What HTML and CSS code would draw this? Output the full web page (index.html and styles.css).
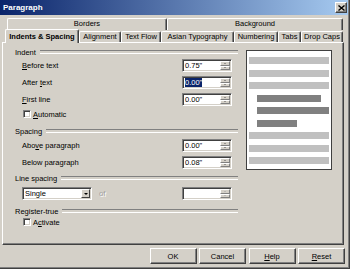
FILE: index.html
```html
<!DOCTYPE html>
<html lang="en">
<head>
  <meta charset="UTF-8" />
  <title>Paragraph</title>
  <link rel="stylesheet" href="styles.css">
</head>
<body>
  <div class="dialog">
    <div class="titlebar">
      <span class="title">Paragraph</span>
      <span class="close">
        <svg width="7" height="6" viewBox="0 0 7 6"><path d="M0.5 0.5 L6.5 5.5 M6.5 0.5 L0.5 5.5" stroke="#000" stroke-width="1.4" fill="none"/></svg>
      </span>
    </div>

    <div class="tabs">
      <div class="tabrow tabrow-back">
        <div class="tab tab-borders">Borders</div>
        <div class="tab">Background</div>
      </div>
      <div class="tabrow tabrow-front">
        <div class="tab active w-indents">Indents &amp; Spacing</div>
        <div class="tab w-align">Alignment</div>
        <div class="tab w-flow">Text Flow</div>
        <div class="tab w-asian">Asian Typography</div>
        <div class="tab w-num">Numbering</div>
        <div class="tab w-tabs">Tabs</div>
        <div class="tab w-caps">Drop Caps</div>
      </div>
    </div>

    <div class="panel">
      <div class="form">
        <div class="group-head">Indent</div>
        <div class="row first">
          <span><u>B</u>efore text</span>
          <div class="spin"><span class="spin-value">0.75"</span><span class="spin-btns"><i class="up"></i><i class="down"></i></span></div>
        </div>
        <div class="row">
          <span>After <u>t</u>ext</span>
          <div class="spin"><span class="spin-value"><span class="sel">0.00"</span></span><span class="spin-btns"><i class="up"></i><i class="down"></i></span></div>
        </div>
        <div class="row">
          <span><u>F</u>irst line</span>
          <div class="spin"><span class="spin-value">0.00"</span><span class="spin-btns"><i class="up"></i><i class="down"></i></span></div>
        </div>
        <div class="check-row">
          <span class="checkbox"></span><span><u>A</u>utomatic</span>
        </div>

        <div class="group-head spacing-head">Spacing</div>
        <div class="row above">
          <span>Abo<u>v</u>e paragraph</span>
          <div class="spin"><span class="spin-value">0.00"</span><span class="spin-btns"><i class="up"></i><i class="down"></i></span></div>
        </div>
        <div class="row">
          <span>Below paragraph</span>
          <div class="spin"><span class="spin-value">0.08"</span><span class="spin-btns"><i class="up"></i><i class="down"></i></span></div>
        </div>

        <div class="group-head">Line spacing</div>
        <div class="row select-row">
          <div class="select"><span class="select-value">Single</span><span class="select-btn"></span></div>
          <span class="of">of</span>
          <div class="spin disabled"><span class="spin-value"></span><span class="spin-btns"><i class="up"></i><i class="down"></i></span></div>
        </div>

        <div class="group-head register-head">Register-true</div>
        <div class="check-row activate">
          <span class="checkbox"></span><span>A<u>c</u>tivate</span>
        </div>
      </div>

      <div class="preview">
        <div class="bar"></div>
        <div class="bar"></div>
        <div class="bar"></div>
        <div class="bar dark bar-a"></div>
        <div class="bar dark bar-b"></div>
        <div class="bar dark bar-c"></div>
        <div class="bar"></div>
        <div class="bar"></div>
        <div class="bar"></div>
      </div>
    </div>

    <div class="buttons">
      <button>OK</button>
      <button>Cancel</button>
      <button><u>H</u>elp</button>
      <button><u>R</u>eset</button>
    </div>
  </div>
</body>
</html>
```

FILE: styles.css
```css
* {
  box-sizing: border-box;
  margin: 0;
  padding: 0;
}

body {
  width: 350px;
  height: 269px;
  overflow: hidden;
  background-color: #d4d0c8;
  font-family: "Liberation Sans", Arial, sans-serif;
  font-size: 7.5px;
  color: #000;
}

.dialog {
  height: 269px;
  border-right: 1px solid #404040;
  border-bottom: 1px solid #404040;
  box-shadow: inset -1px -1px #808080;
}

/* title bar */
.titlebar {
  height: 15px;
  margin-right: 1px;
  padding: 0 1px 0 3px;
  display: flex;
  align-items: center;
  justify-content: space-between;
  background: linear-gradient(to right, #0a246a, #a6caf0);
}

.title {
  color: white;
  font-weight: bold;
  font-size: 8px;
}

.close {
  width: 12px;
  height: 11px;
  display: flex;
  align-items: center;
  justify-content: center;
  background-color: #d4d0c8;
  border: 1px solid;
  border-color: #fff #404040 #404040 #fff;
  box-shadow: inset -1px -1px #808080;
}

/* tabs */
.tabs {
  margin-top: 3px;
}

.tabrow {
  display: flex;
  height: 12px;
}

.tabrow-back {
  margin-left: 7px;
  width: 336px;
}

.tabrow-front {
  margin-left: 5px;
}

.tab {
  flex: 1 1 auto;
  height: 12px;
  line-height: 10px;
  text-align: center;
  white-space: nowrap;
  border: 1px solid;
  border-bottom: none;
  border-color: #fff #404040 #404040 #fff;
  border-radius: 2px 2px 0 0;
  box-shadow: inset -1px 0 #808080;
}

.tab-borders {
  flex: 0 0 160px;
}

.tabrow-front .tab {
  flex: none;
  margin-top: 1px;
  height: 11px;
}

.w-indents { width: 74px; }
.w-align { width: 42px; }
.w-flow { width: 40px; }
.w-asian { width: 73px; }
.w-num { width: 44px; }
.w-tabs { width: 23px; }
.w-caps { width: 42px; }

.tabrow-front .tab.active {
  position: relative;
  z-index: 1;
  margin-top: -1px;
  height: 14px;
  line-height: 13px;
  font-weight: bold;
  background-color: #d4d0c8;
}

/* panel */
.panel {
  margin-left: 2px;
  width: 342px;
  height: 203px;
  padding: 4px 0 0 12px;
  display: flex;
  gap: 8px;
  border: 1px solid;
  border-color: #fff #404040 #404040 #fff;
  box-shadow: inset -1px -1px #808080;
}

.form {
  width: 223px;
  flex-shrink: 0;
}

.group-head {
  height: 10px;
  display: flex;
  align-items: center;
  gap: 4px;
  margin-top: 4px;
}

.group-head:first-child {
  margin-top: 0;
}

.group-head::after {
  content: "";
  flex: 1;
  height: 2px;
  border-top: 1px solid #808080;
  border-bottom: 1px solid #fff;
}

.spacing-head {
  margin-top: 8px;
}

.register-head {
  margin-top: 6px;
}

.row {
  height: 13px;
  margin-top: 4px;
  padding: 0 6px 0 7px;
  display: flex;
  align-items: center;
  justify-content: space-between;
}

.row.first {
  margin-top: 2px;
}

.row.above {
  margin-top: 3px;
}

.check-row {
  height: 8px;
  margin-top: 4px;
  padding-left: 8px;
  display: flex;
  align-items: center;
  gap: 2px;
}

.check-row.activate {
  margin-top: 2px;
}

.checkbox {
  width: 8px;
  height: 8px;
  background-color: #fff;
  border: 1px solid;
  border-color: #808080 #fff #fff #808080;
  box-shadow: inset 1px 1px #404040, inset -1px -1px #d4d0c8;
}

/* spin field */
.spin {
  width: 50px;
  height: 13px;
  padding: 1px;
  display: flex;
  background-color: #fff;
  border: 1px solid;
  border-color: #808080 #fff #fff #808080;
  box-shadow: inset 1px 1px #404040, inset -1px -1px #d4d0c8;
}

.spin-value {
  flex: 1;
  line-height: 9px;
  padding-left: 1px;
}

.sel {
  background-color: #0a246a;
  color: #fff;
}

.spin-btns {
  width: 10px;
  display: flex;
  flex-direction: column;
}

.spin-btns i {
  flex: 1;
  display: flex;
  align-items: center;
  justify-content: center;
  background-color: #d4d0c8;
  border: 1px solid;
  border-color: #fff #808080 #808080 #fff;
}

.spin-btns i::before {
  content: "";
  border-left: 1.5px solid transparent;
  border-right: 1.5px solid transparent;
}

.spin-btns .up::before {
  border-bottom: 1.5px solid #505050;
}

.spin-btns .down::before {
  border-top: 1.5px solid #505050;
}

.spin.disabled .spin-btns i::before {
  border-top-color: #a0a0a0;
  border-bottom-color: #a0a0a0;
}

/* select */
.select-row {
  justify-content: flex-start;
}

.select {
  width: 70px;
  height: 13px;
  padding: 1px;
  display: flex;
  background-color: #fff;
  border: 1px solid;
  border-color: #808080 #fff #fff #808080;
  box-shadow: inset 1px 1px #404040, inset -1px -1px #d4d0c8;
}

.select-value {
  flex: 1;
  line-height: 9px;
  padding-left: 1px;
}

.select-btn {
  width: 9px;
  display: flex;
  align-items: center;
  justify-content: center;
  background-color: #d4d0c8;
  border: 1px solid;
  border-color: #fff #404040 #404040 #fff;
}

.select-btn::before {
  content: "";
  border-left: 2.5px solid transparent;
  border-right: 2.5px solid transparent;
  border-top: 2.5px solid #000;
}

.of {
  margin-left: 7px;
  color: #a0a0a0;
  text-shadow: 1px 1px #fff;
}

.select-row .spin {
  margin-left: auto;
}

/* preview */
.preview {
  width: 86px;
  height: 120px;
  margin-top: 3px;
  padding: 6px 2px 0 2px;
  background-color: #fff;
  border: 1px solid #404040;
}

.bar {
  height: 7px;
  margin-bottom: 5.5px;
  background-color: #c0c0c0;
}

.bar.dark {
  margin-left: 8px;
  background-color: #808080;
}

.bar-a {
  width: 64px;
}

.bar-b {
  width: 72px;
}

.bar-c {
  width: 40px;
}

/* buttons */
.buttons {
  margin-top: 3px;
  padding-right: 4px;
  display: flex;
  justify-content: flex-end;
  gap: 2.5px;
}

button {
  width: 47px;
  height: 16px;
  font-family: "Liberation Sans", Arial, sans-serif;
  font-size: 7.5px;
  color: #000;
  background-color: #d4d0c8;
  border: 1px solid;
  border-color: #fff #404040 #404040 #fff;
  box-shadow: inset -1px -1px #808080;
}
```
